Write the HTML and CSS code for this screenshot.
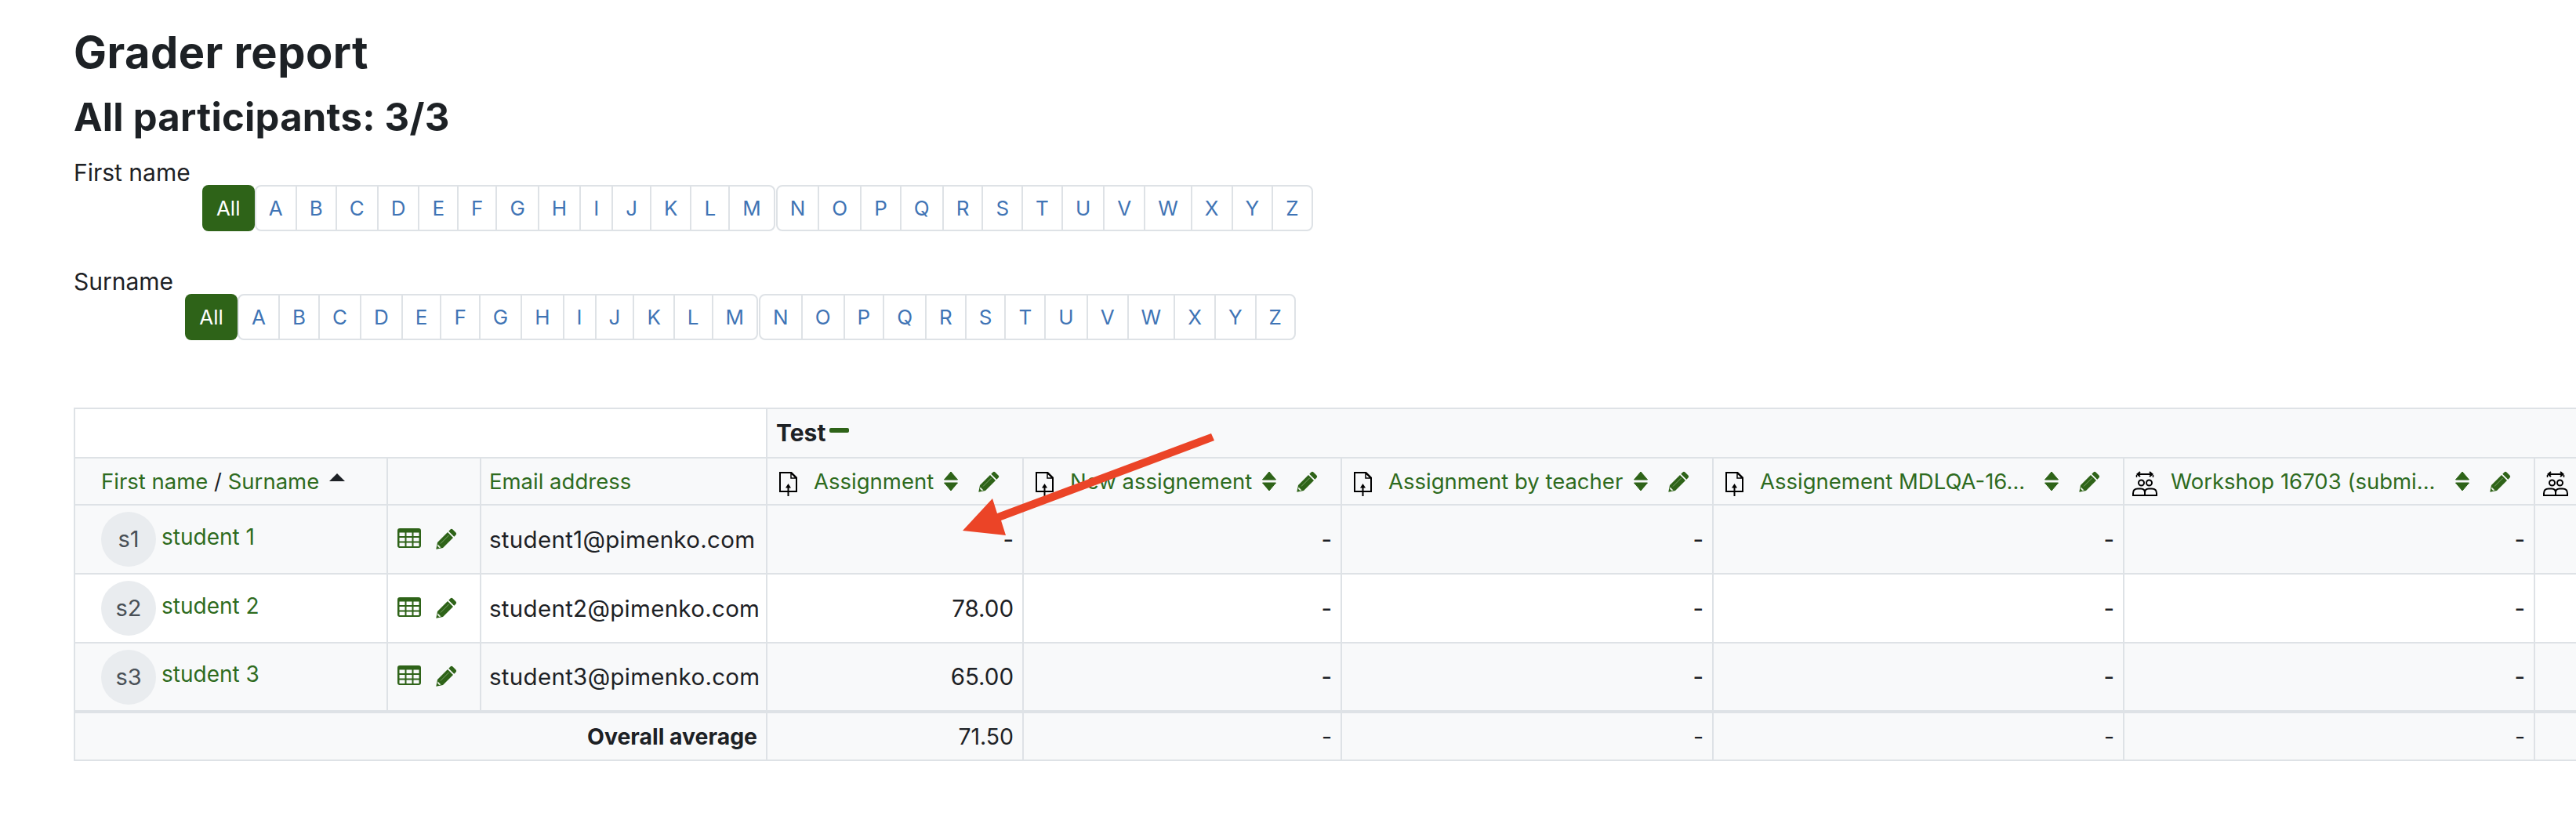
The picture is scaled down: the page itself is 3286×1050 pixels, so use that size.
FILE: index.html
```html
<!DOCTYPE html>
<html lang="en">
<head>
<meta charset="utf-8">
<title>Grader report</title>
<link rel="stylesheet" href="styles.css">
</head>
<body>
<svg class="defs" aria-hidden="true">
  <symbol id="pencil" viewBox="0 0 27 27">
    <path d="M2 18 15 5l7 7L9 25l-8.700 1.700z" fill="currentColor"/>
    <path d="M16.300 3.700 18.500 1.500q1.500-1.500 3 0l4 4q1.500 1.500 0 3l-2.200 2.200z" fill="currentColor"/>
    <path d="M6 19.500 16.500 9" stroke="#8fb37f" stroke-width=".8" fill="none"/>
    <path d="M2.600 20.500 6.500 24.400l-2.200.6-2.300-2.300z" fill="#e8f0e2"/>
  </symbol>
  <symbol id="sort" viewBox="0 0 19 26">
    <path d="M9.500 1 18 11H1z" fill="currentColor" stroke="currentColor" stroke-linejoin="round"/>
    <path d="M1 15h17L9.500 25z" fill="currentColor" stroke="currentColor" stroke-linejoin="round"/>
  </symbol>
  <symbol id="grid" viewBox="0 0 30 25">
    <path fill-rule="evenodd" fill="currentColor" d="M3 0h24a3 3 0 0 1 3 3v19a3 3 0 0 1-3 3H3a3 3 0 0 1-3-3V3a3 3 0 0 1 3-3zM2.500 5.500v4.500h7V5.500zm9 0v4.500h7V5.500zm9 0v4.500h7V5.500zM2.500 12v4.500h7V12zm9 0v4.500h7V12zm9 0v4.500h7V12zM2.500 18.500V23h7v-4.500zm9 0V23h7v-4.500zm9 0V23h7v-4.500z"/>
  </symbol>
  <symbol id="file" viewBox="0 0 23 31">
    <path d="M1 25V1h14.500L22 7.500V25z" fill="none" stroke="#000" stroke-width="2"/>
    <path d="M15 1.500 15 8h6.500z" fill="none" stroke="#000" stroke-width="1.500"/>
    <path d="M11.500 15 15 20.500H8z" fill="#000"/>
    <path d="M11.500 19v12" stroke="#000" stroke-width="2"/>
  </symbol>
  <symbol id="workshop" viewBox="0 0 32 32">
    <path d="M8 4h16M10 1 6.500 4l3.500 3M22 1l3.500 3L22 7" fill="none" stroke="#000" stroke-width="2"/>
    <path d="M5.500 8V5M26.500 8V5" stroke="#000" stroke-width="1.500"/>
    <circle cx="11.500" cy="15" r="3.500" fill="none" stroke="#000" stroke-width="2"/>
    <circle cx="21.500" cy="15" r="3.500" fill="none" stroke="#000" stroke-width="2"/>
    <path d="M1 31v-2.500q0-6 6-6h4q5 0 5 5q0-5 5-5h4q6 0 6 6V31zM16 27v4" fill="none" stroke="#000" stroke-width="2"/>
  </symbol>
</svg>

<div class="page">
  <h1 class="title">Grader report</h1>
  <h2 class="subtitle">All participants: 3/3</h2>

  <div class="initials">
    <span class="initials-label">First name</span>
    <div class="initials-bar">
      <a class="all">All</a>
      <div class="group"><a>A</a><a>B</a><a>C</a><a>D</a><a>E</a><a>F</a><a>G</a><a>H</a><a>I</a><a>J</a><a>K</a><a>L</a><a>M</a></div>
      <div class="group"><a>N</a><a>O</a><a>P</a><a>Q</a><a>R</a><a>S</a><a>T</a><a>U</a><a>V</a><a>W</a><a>X</a><a>Y</a><a>Z</a></div>
    </div>
  </div>
  <div class="initials">
    <span class="initials-label">Surname</span>
    <div class="initials-bar">
      <a class="all">All</a>
      <div class="group"><a>A</a><a>B</a><a>C</a><a>D</a><a>E</a><a>F</a><a>G</a><a>H</a><a>I</a><a>J</a><a>K</a><a>L</a><a>M</a></div>
      <div class="group"><a>N</a><a>O</a><a>P</a><a>Q</a><a>R</a><a>S</a><a>T</a><a>U</a><a>V</a><a>W</a><a>X</a><a>Y</a><a>Z</a></div>
    </div>
  </div>

  <table class="grades">
    <colgroup>
      <col class="c-name"><col class="c-act"><col class="c-email"><col class="c-a1"><col class="c-a2"><col class="c-a3"><col class="c-a4"><col class="c-a4"><col class="c-a4">
    </colgroup>
    <tr class="r-cat">
      <td colspan="3" class="blank"></td>
      <th colspan="6" class="cat"><span class="cat-inner">Test<span class="minus"></span></span></th>
    </tr>
    <tr class="r-head shade">
      <th class="lead"><a class="g">First name</a> / <a class="g">Surname</a><span class="caret"></span></th>
      <th></th>
      <th class="pad"><a class="g">Email address</a></th>
      <th><div class="hd"><svg class="i-file"><use href="#file"/></svg><a class="g name">Assignment</a><svg class="i-sort"><use href="#sort"/></svg><svg class="i-pen"><use href="#pencil"/></svg></div></th>
      <th><div class="hd"><svg class="i-file"><use href="#file"/></svg><a class="g name">New assignement</a><svg class="i-sort"><use href="#sort"/></svg><svg class="i-pen"><use href="#pencil"/></svg></div></th>
      <th><div class="hd"><svg class="i-file"><use href="#file"/></svg><a class="g name">Assignment by teacher</a><svg class="i-sort"><use href="#sort"/></svg><svg class="i-pen"><use href="#pencil"/></svg></div></th>
      <th><div class="hd"><svg class="i-file"><use href="#file"/></svg><a class="g name">Assignement MDLQA-16...</a><svg class="i-sort"><use href="#sort"/></svg><svg class="i-pen"><use href="#pencil"/></svg></div></th>
      <th><div class="hd"><svg class="i-work"><use href="#workshop"/></svg><a class="g name">Workshop 16703 (submi...</a><svg class="i-sort"><use href="#sort"/></svg><svg class="i-pen"><use href="#pencil"/></svg></div></th>
      <th><div class="hd"><svg class="i-work"><use href="#workshop"/></svg></div></th>
    </tr>
    <tr class="r-user shade">
      <td class="lead"><div class="user"><span class="avatar">s1</span><a class="g uname">student 1</a></div></td>
      <td><div class="acts"><svg class="i-grid"><use href="#grid"/></svg><svg class="i-pen"><use href="#pencil"/></svg></div></td>
      <td class="pad email">student1@pimenko.com</td>
      <td class="num">-</td><td class="num">-</td><td class="num">-</td><td class="num">-</td><td class="num">-</td><td></td>
    </tr>
    <tr class="r-user">
      <td class="lead"><div class="user"><span class="avatar">s2</span><a class="g uname">student 2</a></div></td>
      <td><div class="acts"><svg class="i-grid"><use href="#grid"/></svg><svg class="i-pen"><use href="#pencil"/></svg></div></td>
      <td class="pad email">student2@pimenko.com</td>
      <td class="num">78.00</td><td class="num">-</td><td class="num">-</td><td class="num">-</td><td class="num">-</td><td></td>
    </tr>
    <tr class="r-user shade">
      <td class="lead"><div class="user"><span class="avatar">s3</span><a class="g uname">student 3</a></div></td>
      <td><div class="acts"><svg class="i-grid"><use href="#grid"/></svg><svg class="i-pen"><use href="#pencil"/></svg></div></td>
      <td class="pad email">student3@pimenko.com</td>
      <td class="num">65.00</td><td class="num">-</td><td class="num">-</td><td class="num">-</td><td class="num">-</td><td></td>
    </tr>
    <tr class="r-avg shade">
      <th colspan="3" class="avg-label">Overall average</th>
      <td class="num">71.50</td><td class="num">-</td><td class="num">-</td><td class="num">-</td><td class="num">-</td><td></td>
    </tr>
  </table>

  <svg class="annotation" viewBox="0 0 3286 1050" aria-hidden="true">
    <polygon points="1545,553 1549,562 1277,664 1283,683 1228,677 1266,636 1272,655" fill="#eb4427"/>
  </svg>
</div>
</body>
</html>
```

FILE: styles.css
```css
html, body {
  margin: 0;
  padding: 0;
  background: #fff;
}
body {
  font-family: Inter, "Liberation Sans", sans-serif;
  font-size: 29.5px;
  line-height: 1.5;
  color: #1d2125;
}
.defs {
  display: block;
  width: 0;
  height: 0;
  position: absolute;
}
.page {
  position: relative;
  width: 3286px;
  height: 1050px;
  overflow: hidden;
  box-sizing: border-box;
  padding: 34px 0 0 94px;
}
.title {
  margin: 0;
  font-size: 56px;
  line-height: 67px;
  font-weight: 700;
  letter-spacing: 0.45px;
}
.subtitle {
  margin: 19px 0 0;
  font-size: 49px;
  line-height: 59px;
  font-weight: 700;
  letter-spacing: 0.25px;
}
.initials {
  display: grid;
  grid-template-columns: auto auto;
  justify-content: start;
  margin-top: 25px;
}
.initials + .initials {
  margin-top: 48px;
}
.initials-label {
  grid-column: 1;
  grid-row: 1;
  line-height: 32px;
  font-size: 30px;
}
.initials-bar {
  grid-column: 2;
  grid-row: 2;
  display: flex;
  margin-left: 15px;
  font-size: 26px;
  line-height: 59px;
}
.all {
  width: 67px;
  height: 59px;
  background: #2e6318;
  color: #fff;
  border-radius: 8px;
  text-align: center;
}
.group {
  display: flex;
  height: 59px;
  box-sizing: border-box;
  margin-right: 1px;
  border: 2px solid #dee2e6;
  border-radius: 8px;
}
.group a {
  padding: 0 16px;
  line-height: 55px;
  color: #3f74b5;
  border-left: 2px solid #dee2e6;
}
.group a:first-child {
  border-left: 0;
}
.grades {
  table-layout: fixed;
  border-collapse: collapse;
  width: 3663px;
  margin: 86px 0 0;
}
.c-name { width: 399px; }
.c-act { width: 119px; }
.c-email { width: 365px; }
.c-a1 { width: 327px; }
.c-a2 { width: 406px; }
.c-a3 { width: 474px; }
.c-a4 { width: 524px; }
.grades th, .grades td {
  border: 2px solid #dee2e6;
  padding: 0;
  font-weight: 400;
  text-align: left;
  white-space: nowrap;
}
.shade { background: #f8f9fa; }
.g { color: #2e6b1e; }
.r-cat { height: 63px; }
.r-head { height: 60px; }
.r-user { height: 88px; }
.r-avg { height: 62px; }
.r-head th { font-size: 27.5px; }
.r-head .g {
  display: inline-block;
  padding-top: 2px;
}
.grades .r-avg td, .grades .r-avg th {
  border-top-width: 4px;
  padding-top: 2px;
  font-size: 28.4px;
}
.blank { background: #fff; }
.cat { background: #f8f9fa; padding-left: 11px !important; }
.cat-inner {
  display: flex;
  align-items: center;
  font-size: 30px;
  font-weight: 700;
}
.minus {
  width: 25px;
  height: 6px;
  margin: -8px 0 0 5px;
  background: #2e6318;
  border-radius: 2px;
}
.lead { padding-left: 33px !important; }
.caret {
  display: inline-block;
  width: 0;
  height: 0;
  margin: 0 0 16px 13px;
  vertical-align: middle;
  border-left: 10px solid transparent;
  border-right: 10px solid transparent;
  border-bottom: 10px solid #1d2125;
}
.pad { padding-left: 10px !important; }
.email { letter-spacing: 0.3px; }
.hd {
  display: flex;
  align-items: center;
  height: 34px;
  padding: 0 29px 0 15px;
}
.name {
  flex: 1;
  min-width: 0;
  overflow: hidden;
}
.i-file {
  width: 23px;
  height: 31px;
  margin: 7px 21px 0 0;
  flex: none;
}
.i-work {
  width: 32px;
  height: 32px;
  margin: 6px 17px 0 -5px;
  flex: none;
}
.i-sort {
  width: 20px;
  height: 26px;
  margin-left: 8px;
  flex: none;
  color: #2e6318;
}
.i-pen {
  width: 27px;
  height: 27px;
  margin-left: 25px;
  flex: none;
  color: #2e6318;
}
.user {
  display: flex;
  align-items: center;
  gap: 7px;
}
.avatar {
  width: 70px;
  height: 70px;
  border-radius: 50%;
  background: #e9ecef;
  color: #495057;
  font-size: 29px;
  line-height: 70px;
  text-align: center;
}
.uname {
  font-size: 28px;
  margin-bottom: 7px;
}
.acts {
  display: flex;
  align-items: flex-start;
  padding: 0 0 2px 12px;
}
.i-grid {
  width: 30px;
  height: 25px;
  color: #2e6318;
}
.acts .i-pen { margin-left: 19px; }
.grades .num {
  text-align: right;
  padding-right: 11px;
}
.grades .avg-label {
  text-align: right;
  padding-right: 11px;
  font-weight: 700;
}
.annotation {
  position: absolute;
  top: 0;
  left: 0;
  width: 3286px;
  height: 1050px;
  pointer-events: none;
}
```
